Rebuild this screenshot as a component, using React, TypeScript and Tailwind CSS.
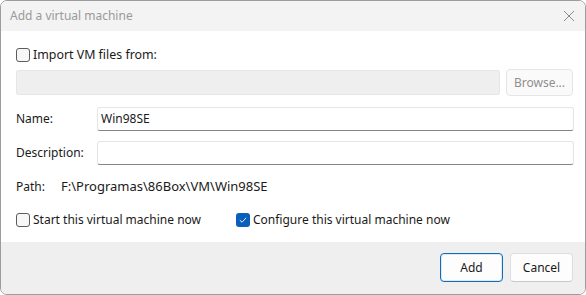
import React from "react";

function Check({ checked }: { checked?: boolean }) {
  if (checked) {
    return (
      <span className="flex h-[14px] w-[14px] shrink-0 items-center justify-center rounded-[3px] bg-[#0a5fbd]">
        <svg width="8" height="6" viewBox="0 0 8 6" fill="none">
          <path d="M0.8 3.2 L3 5.2 L7.2 0.8" stroke="#e8f0fb" strokeWidth="1" />
        </svg>
      </span>
    );
  }
  return <span className="block h-[14px] w-[14px] shrink-0 rounded-[3px] border border-[#5c5c5c] bg-[#f7f7f7]" />;
}

export default function App() {
  return (
    <div
      className="flex h-[295px] w-[586px] flex-col overflow-hidden rounded-[7px] border border-[#9c9c9c] bg-white text-[12px] text-[#1a1a1a]"
      style={{ fontFamily: '"Noto Sans", "Open Sans", sans-serif' }}
    >
      <div className="flex h-[30px] shrink-0 items-center justify-between bg-[#f3f3f3] pl-[9px] pr-[9px]">
        <span className="text-[12px] text-[#9a9a9a]">Add a virtual machine</span>
        <svg width="12" height="12" viewBox="0 0 12 12" className="mr-[1px]">
          <path d="M1 1 L11 11 M11 1 L1 11" stroke="#8a8a8a" strokeWidth="1" />
        </svg>
      </div>
      <div className="flex flex-1 flex-col pl-[15px] pr-[11px] pt-[16px]">
        <label className="flex h-[16px] items-center gap-[3px]">
          <Check />
          <span className="text-[12.4px]">Import VM files from:</span>
        </label>
        <div className="mt-[6px] flex items-center gap-[6px]">
          <div className="h-[25px] flex-1 rounded-[2px] border border-[#e6e6e6] bg-[#efefef]" />
          <div className="mr-[1px] flex h-[27px] w-[67px] items-center justify-center rounded-[4px] border border-[#e5e5e5] bg-[#fafafa] text-[#8f8f8f]">
            Browse...
          </div>
        </div>
        <div className="mt-[11px] flex items-center">
          <span className="w-[81px]">Name:</span>
          <div className="flex h-[24px] flex-1 items-center rounded-[3px] border border-[#e5e5e5] border-b-[#858585] bg-white px-[3px]">
            Win98SE
          </div>
        </div>
        <div className="mt-[10px] flex items-center">
          <span className="w-[81px]">Description:</span>
          <div className="h-[24px] flex-1 rounded-[3px] border border-[#e5e5e5] border-b-[#858585] bg-white" />
        </div>
        <div className="mt-[13px] flex h-[18px] items-center">
          <span className="w-[45px]">Path:</span>
          <span className="text-[13px]">F:\Programas\86Box\VM\Win98SE</span>
        </div>
        <div className="mt-[16px] flex h-[16px] items-center">
          <label className="flex w-[220px] items-center gap-[3px]">
            <Check />
            <span>Start this virtual machine now</span>
          </label>
          <label className="flex items-center gap-[3px]">
            <Check checked />
            <span>Configure this virtual machine now</span>
          </label>
        </div>
      </div>
      <div className="flex h-[52px] shrink-0 items-start justify-end gap-[7px] bg-[#efefef] pr-[12px] pt-[11px]">
        <button className="flex h-[29px] w-[63px] items-center justify-center rounded-[4px] border border-[#0f6cbd] bg-[#fdfdfd] shadow-[inset_0_0_0_1px_#0f6cbd22]">
          Add
        </button>
        <button className="flex h-[29px] w-[63px] items-center justify-center rounded-[4px] border border-[#dedede] border-b-[#c8c8c8] bg-[#fdfdfd]">
          Cancel
        </button>
      </div>
    </div>
  );
}
